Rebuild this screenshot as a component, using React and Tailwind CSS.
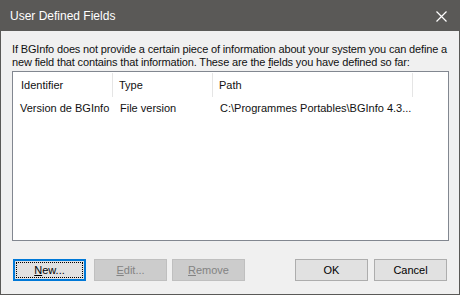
import React from 'react'

const font = { fontFamily: '"Liberation Sans", Arial, sans-serif' }

function Button({ children, disabled, focused }) {
    if (focused) {
        return (
            <div className="w-[73px] h-[22px] border-2 border-[#0078d7] bg-[#e1e1e1] p-px">
                <div className="h-full w-full border border-dotted border-black flex items-center justify-center text-[11px] text-black">
                    {children}
                </div>
            </div>
        )
    }
    return (
        <div
            className={
                disabled
                    ? 'w-[73px] h-[22px] border border-[#bfbfbf] bg-[#cccccc] flex items-center justify-center text-[11px] text-[#838383]'
                    : 'w-[73px] h-[22px] border border-[#adadad] bg-[#e1e1e1] flex items-center justify-center text-[11px] text-black'
            }
        >
            {children}
        </div>
    )
}

export default function App() {
    return (
        <div className="w-[460px] h-[295px] bg-[#5a5957] p-px flex flex-col" style={font}>
            {/* title bar */}
            <div className="h-[30px] flex items-center justify-between pl-[9px] pr-[12px] text-white">
                <span className="text-[12px]">User Defined Fields</span>
                <svg width="11" height="11" viewBox="0 0 11 11">
                    <path d="M0.5 0.5 L10.5 10.5 M10.5 0.5 L0.5 10.5" stroke="white" strokeWidth="1.2" />
                </svg>
            </div>

            {/* body */}
            <div className="flex-1 bg-[#f0f0f0] flex flex-col px-[11px]">
                <div className="mt-[12px] text-[11px] leading-[13px] text-[#111] tracking-[-0.15px]">
                    <p>If BGInfo does not provide a certain piece of information about your system you can define a</p>
                    <p>new field that contains that information. These are the <u>f</u>ields you have defined so far:</p>
                </div>

                <div className="mt-[2px] h-[170px] mr-[-1px] border border-[#828790] bg-white text-[11px] text-[#111]">
                    <div className="flex h-[25px] items-center pt-[1px]">
                        <div className="w-[100px] h-full pl-[8px] flex items-center border-r border-[#e5e5e5]">Identifier</div>
                        <div className="w-[100px] h-full pl-[6px] flex items-center border-r border-[#e5e5e5]">Type</div>
                        <div className="w-[200px] h-full pl-[6px] flex items-center border-r border-[#e5e5e5]">Path</div>
                    </div>
                    <div className="flex h-[18px] items-center mt-[2px]">
                        <div className="w-[100px] pl-[7px]">Version de BGInfo</div>
                        <div className="w-[100px] pl-[7px]">File version</div>
                        <div className="w-[200px] pl-[7px]">C:\Programmes Portables\BGInfo 4.3...</div>
                    </div>
                </div>

                <div className="mt-[18px] flex items-center">
                    <div className="ml-[1px]">
                        <Button focused><span><u>N</u>ew...</span></Button>
                    </div>
                    <div className="ml-[8px]">
                        <Button disabled><span><u>E</u>dit...</span></Button>
                    </div>
                    <div className="ml-[5px]">
                        <Button disabled><span><u>R</u>emove</span></Button>
                    </div>
                    <div className="ml-auto flex gap-[6px] mr-[1px]">
                        <Button>OK</Button>
                        <Button>Cancel</Button>
                    </div>
                </div>
            </div>
        </div>
    )
}
